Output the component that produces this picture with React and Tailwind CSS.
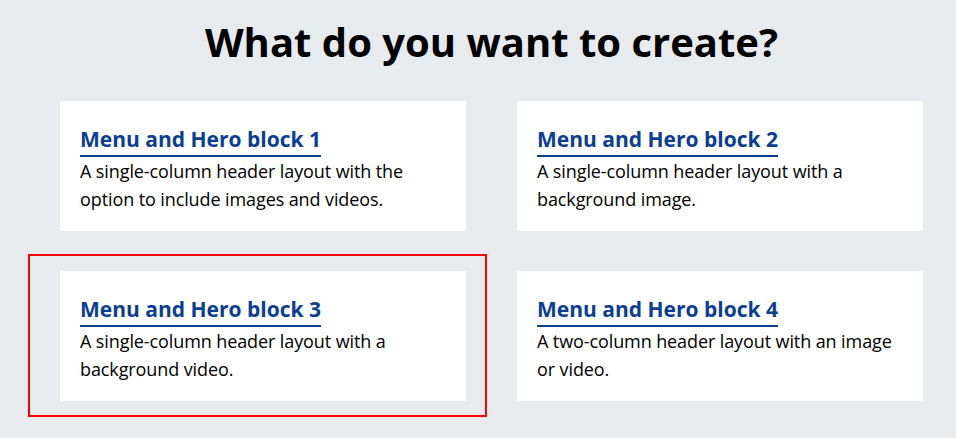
import React from "react";

const blocks = [
  { title: "Menu and Hero block 1", text: "A single-column header layout with the option to include images and videos." },
  { title: "Menu and Hero block 2", text: "A single-column header layout with a background image." },
  { title: "Menu and Hero block 3", text: "A single-column header layout with a background video.", selected: true },
  { title: "Menu and Hero block 4", text: "A two-column header layout with an image or video." },
];

const Card = ({ title, text, selected }) => (
  <div className="relative">
    {selected && (
      <div className="absolute -left-[32px] -top-[17px] -right-[21px] -bottom-[16px] border-2 border-[#ff0000] pointer-events-none" />
    )}
    <div className="bg-white h-[130px] pl-5 pr-3 pt-[24px]">
      <a href="#" className="inline-block text-[21px] font-bold leading-[28px] text-[#0b3e93] border-b-2 border-[#0b3e93] pb-[2px]">
        {title}
      </a>
      <p className="text-[18px] leading-[28px] text-black tracking-[-0.1px]">{text}</p>
    </div>
  </div>
);

export default function App() {
  return (
    <div className="min-h-[438px] w-[956px] bg-[#e8ebee] font-['Open_Sans',sans-serif] pl-[60px] pt-[14px]">
      <div className="w-[863px]">
        <h1 className="text-center text-[40px] font-bold leading-[56px] text-black mb-[31px]">
          What do you want to create?
        </h1>
        <div className="grid grid-cols-[406px_406px] gap-x-[51px] gap-y-[40px]">
          {blocks.map((b) => (
            <Card key={b.title} {...b} />
          ))}
        </div>
      </div>
    </div>
  );
}
